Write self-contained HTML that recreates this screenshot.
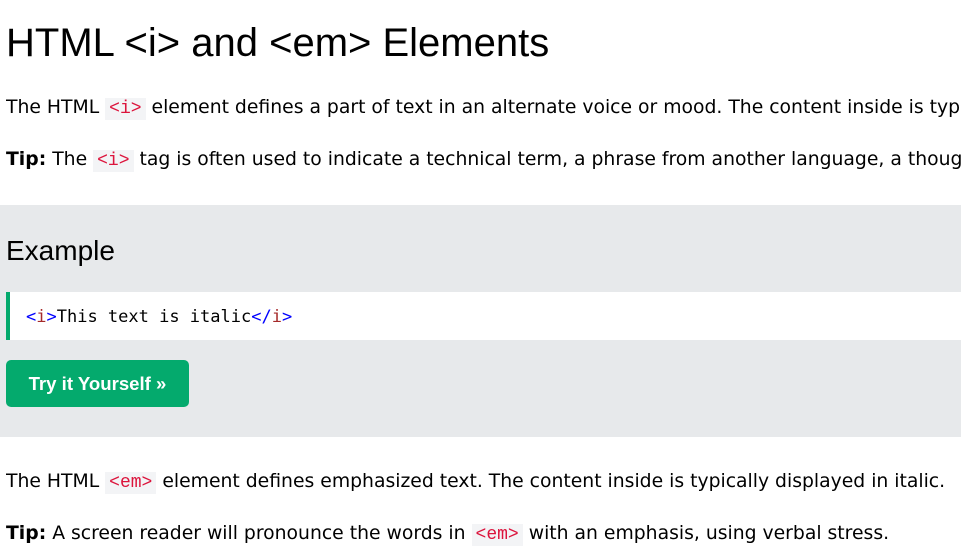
<!DOCTYPE html>
<html><head><style>
body{margin:0;width:961px;height:558px;overflow:hidden;background:#fff;font-family:"DejaVu Sans",Verdana,sans-serif;color:#000;position:relative}
.a{position:absolute;left:6px;width:955px;overflow:hidden;white-space:nowrap}
h1{position:absolute;left:6px;top:18px;margin:0;font-family:"Liberation Sans",sans-serif;font-weight:normal;font-size:40px;line-height:50px;white-space:nowrap}
p{margin:0;font-size:18.8px;line-height:26px}
code{font-family:"Liberation Mono",monospace;font-size:18px;color:#dc143c;background:#f3f4f6;padding:1px 4px}
.panel{position:absolute;left:0;top:205px;width:961px;height:232px;background:#e7e9eb}
.ex{position:absolute;left:6px;top:29px;font-family:"Liberation Sans",sans-serif;font-size:28px;line-height:34px}
.cb{position:absolute;left:6px;top:87px;width:955px;height:48px;background:#fff;border-left:4px solid #04aa6d;box-sizing:border-box;font-family:"DejaVu Sans Mono",monospace;font-size:17px;line-height:50px;padding-left:16px}
.btn{position:absolute;left:6px;top:155px;width:183px;height:47px;background:#04aa6d;border-radius:5px;color:#fff;font-family:"Liberation Sans",sans-serif;font-weight:bold;font-size:18.6px;line-height:47px;text-align:center}
</style></head><body>
<h1>HTML &lt;i&gt; and &lt;em&gt; Elements</h1>
<p class="a" style="top:95px">The HTML <code>&lt;i&gt;</code> element defines a part of text in an alternate voice or mood. The content inside is typically displayed in italic.</p>
<p class="a" style="top:147px"><b>Tip:</b> The <code>&lt;i&gt;</code> tag is often used to indicate a technical term, a phrase from another language, a thought, a ship name, etc.</p>
<div class="panel">
<div class="ex">Example</div>
<div class="cb"><span style="color:#00f">&lt;</span><span style="color:#a52a2a">i</span><span style="color:#00f">&gt;</span>This text is italic<span style="color:#00f">&lt;/</span><span style="color:#a52a2a">i</span><span style="color:#00f">&gt;</span></div>
<div class="btn">Try it Yourself »</div>
</div>
<p class="a" style="top:469px">The HTML <code>&lt;em&gt;</code> element defines emphasized text. The content inside is typically displayed in italic.</p>
<p class="a" style="top:521px"><b>Tip:</b> A screen reader will pronounce the words in <code>&lt;em&gt;</code> with an emphasis, using verbal stress.</p>
</body></html>
